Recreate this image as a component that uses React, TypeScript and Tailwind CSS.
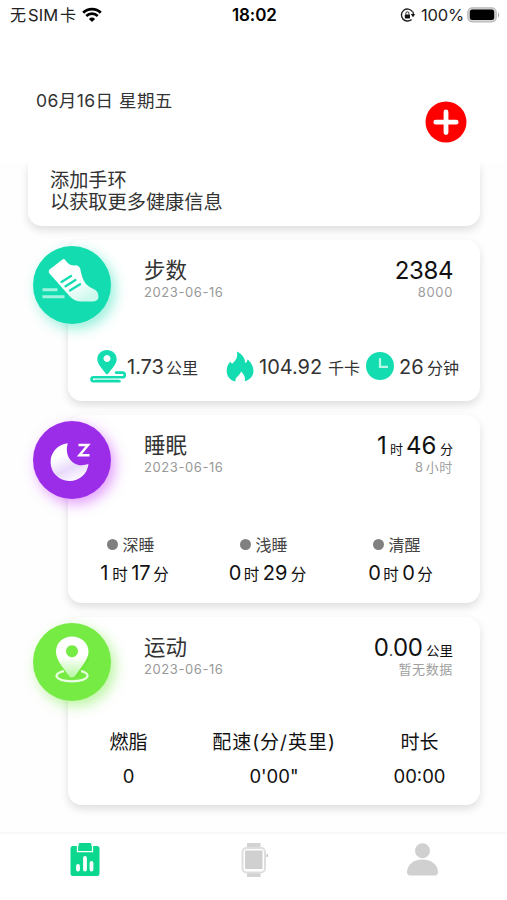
import React from "react";

function Wifi() {
  return (
    <svg className="ml-[7px] h-[16px] w-[20px]" viewBox="0 0 20 16" fill="none" stroke="#000">
      <path d="M1.2 5.7a12.4 12.4 0 0 1 17.6 0" strokeWidth="2.8" />
      <path d="M4.3 9a8 8 0 0 1 11.4 0" strokeWidth="2.6" />
      <path d="M10 15l-3.1-3.1a4.4 4.4 0 0 1 6.2 0z" fill="#000" stroke="none" />
    </svg>
  );
}

function StatusBar() {
  return (
    <div className="flex h-[30px] items-center text-black">
      <div className="flex w-[232px] items-center pl-[10px] text-[#222]">
        <span className="w-[18px] text-[16px]">无</span>
        <span className="w-[32px] text-[16.5px] tracking-[0.1px]">SIM</span>
        <span className="w-[15px] text-[16px]">卡</span>
        <Wifi />
      </div>
      <span className="w-[168px] pt-[1px] text-[17px] font-semibold tracking-[-0.1px]">18:02</span>
      <svg className="h-[14px] w-[16px]" viewBox="0 0 16 14" fill="none">
        <path d="M12.4 3.6A6 6 0 1 0 11.6 11.4" stroke="#222" strokeWidth="1.4" />
        <path d="M12.8 3.4A6 6 0 0 1 13.3 6" stroke="#222" strokeWidth="1.3" />
        <path d="M10.8 6h4.4l-2.2 3.2z" fill="#111" />
        <rect x="4.8" y="6.4" width="5.2" height="4" rx=".6" fill="#111" />
        <path d="M5.9 6.6V5.3a1.5 1.5 0 0 1 3 0v1.3" stroke="#222" strokeWidth="1" />
      </svg>
      <span className="ml-[5px] w-[46px] text-[16.5px] tracking-[-0.2px] text-[#222]">100%</span>
      <svg className="h-[17px] w-[34px]" viewBox="0 0 34 17">
        <rect x=".8" y=".8" width="28.400" height="14" rx="4.5" fill="#d8d8d8" stroke="#b8b8b8" strokeWidth="1.2" />
        <rect x="2.800" y="2.5" width="24.400" height="10.600" rx="2.5" fill="#000" />
        <path d="M31 5.500v5c1.6-.5 1.6-4.500 0-5z" fill="#aaa" />
      </svg>
    </div>
  );
}

function Header() {
  return (
    <header className="h-[163px] shrink-0 bg-white">
      <StatusBar />
      <div className="flex h-[133px] items-start justify-between pr-[40px] pl-[36px]">
        <span className="mt-[57px] text-[17.5px] leading-[27px] tracking-[0.45px] whitespace-nowrap text-[#333]">
          06月16日 星期五
        </span>
        <svg className="mt-[71px] h-[42px] w-[42px]" viewBox="0 0 42 42">
          <circle cx="21" cy="21" r="20.5" fill="#f00" />
          <path d="M21 11v20.500M10.800 21.200h20.400" stroke="#fff" strokeWidth="4.8" strokeLinecap="round" />
        </svg>
      </div>
    </header>
  );
}

function ShoeIcon() {
  return (
    <svg className="h-[78px] w-[78px]" viewBox="0 0 78 78">
      <defs>
        <linearGradient id="shoe" x1="0" y1="0" x2=".7" y2="1">
          <stop offset=".6" stopColor="#fff" />
          <stop offset="1" stopColor="#cdf8ed" />
        </linearGradient>
      </defs>
      <path
        d="M29.500 13.500Q30.800 12.300 32 13.600C34 17.500 38.500 20.500 42.500 19.300Q46 19.500 47.200 22.500C48 27 49.500 34 53.500 38.500Q56 41 61.500 43.500Q65.500 45.500 65.500 51Q65.200 55 60 55.500H49Q41 55.500 36.500 50L16.500 27.500Q14.500 25 17.500 22.800Z"
        fill="url(#shoe)"
      />
      <path d="M28.500 36L38 30M32.500 40.300L42.500 34M37 44.500L47 38.200" stroke="#13ddb0" strokeWidth="2.300" strokeLinecap="round" />
      <path d="M9.500 43.800H24.500M9.500 50.800H31.500" stroke="#a0f3df" strokeWidth="3" />
    </svg>
  );
}

function MoonIcon() {
  return (
    <svg className="h-[78px] w-[78px]" viewBox="0 0 78 78">
      <defs>
        <linearGradient id="moon" x1=".2" y1=".1" x2=".6" y2="1">
          <stop offset=".25" stopColor="#fff" />
          <stop offset=".65" stopColor="#e8dafb" />
          <stop offset="1" stopColor="#fcf9ff" />
        </linearGradient>
      </defs>
      <path d="M34.800 22.200C30.500 36 41.500 48.500 55.500 42.800A19 19 0 1 1 34.800 22.200Z" fill="url(#moon)" />
      <path d="M45.500 24H55L46.500 34.300H56.500" fill="none" stroke="#fff" strokeWidth="2.500" />
    </svg>
  );
}

function PinIcon() {
  return (
    <svg className="h-[78px] w-[78px]" viewBox="0 0 78 78">
      <defs>
        <linearGradient id="pin" x1="0" y1="0" x2="0" y2="1">
          <stop offset=".5" stopColor="#fff" />
          <stop offset="1" stopColor="#b5f7a0" />
        </linearGradient>
      </defs>
      <path d="M39 55L55 33L57 36L45 54Z" fill="#5fd92e" opacity=".3" />
      <path
        fillRule="evenodd"
        d="M39 13.500c9 0 16.500 6.500 16.500 15c0 4.500-2.500 9-5.500 13.500L42 53q-3 3-6 0l-8-11c-3-4.500-5-9-5-13.500c0-8.500 7-15 16-15zM39 22.200a6 6 0 1 0 .01 0z"
        fill="url(#pin)"
      />
      <path d="M31 48.200C20 50 20 58 39 58.300C58 58 58 50 48 48.200" fill="none" stroke="#e9fee2" strokeWidth="2.200" />
    </svg>
  );
}

function RouteIcon() {
  return (
    <svg className="h-[34px] w-[37px]" viewBox="0 0 37 34">
      <path
        fillRule="evenodd"
        d="M17 0c5.500 0 9.700 4 9.700 9.300c0 4.700-4.700 9-8.300 14.200q-1.400 1.500-2.800 0C12 18.300 7.300 14 7.300 9.300C7.300 4 11.500 0 17 0zM17 5a3.500 3.500 0 1 0 .01 0z"
        fill="#13ddb0"
      />
      <path d="M26 22.600H32.500a2.300 2.300 0 0 1 0 4.600H3.500a2 2 0 0 0 0 4H29.500" fill="none" stroke="#13ddb0" strokeWidth="2.600" strokeLinecap="round" />
      <path d="M5 29.300H29" stroke="#a5f2e0" strokeWidth="1.200" />
    </svg>
  );
}

function FlameIcon() {
  return (
    <svg className="relative -top-[1px] h-[31px] w-[28px]" viewBox="0 0 28 31">
      <path
        d="M11 .5C16 3 19.500 7.500 19 12Q21.500 11 21.500 8.500C24.500 10.500 27.500 15 27.500 20C27.500 25 24 29 18.500 30.300C20 27.500 18.500 24 15 20.500C14 25 8.500 26 9.500 30.500C4 29.500 .7 25 .7 19.500Q.7 14.500 4.500 10.500Q4.500 12.500 6.500 12.500C10.500 9 12 5 11 .5Z"
        fill="#13ddb0"
      />
    </svg>
  );
}

function ClockIcon() {
  return (
    <svg className="relative -top-[1px] h-[28px] w-[28px]" viewBox="0 0 28 28">
      <circle cx="14" cy="14" r="14" fill="#13ddb0" />
      <path d="M14 6.200V14.800H22" fill="none" stroke="#b9f8e9" strokeWidth="2.200" />
    </svg>
  );
}

type CardProps = {
  height: string;
  badge: string;
  icon: React.ReactNode;
  title: string;
  value: React.ReactNode;
  goal: React.ReactNode;
  children: React.ReactNode;
};

const shadow = "shadow-[0_4px_8px_rgba(0,0,0,0.13)]";

function Card({ height, badge, icon, title, value, goal, children }: CardProps) {
  return (
    <section className={`relative mt-[14px] ml-[68px] w-[412px] shrink-0 rounded-[14px] bg-white ${shadow} ${height}`}>
      <div className={`absolute top-[5.500px] left-[-35px] h-[78px] w-[78px] rounded-full ${badge}`}>{icon}</div>
      <div className="flex h-[100px] justify-between pt-[16px] pr-[27px] pl-[76px]">
        <div className="flex flex-col">
          <h2 className="text-[21.500px] leading-[28px] text-[#333]">{title}</h2>
          <span className="text-[13px] leading-[17px] tracking-[0.58px] text-[#999]">2023-06-16</span>
        </div>
        <div className="flex flex-col items-end">
          <div className="flex h-[28px] items-baseline whitespace-nowrap text-[#111]">{value}</div>
          <span className="text-[13px] leading-[17px] tracking-[0.65px] whitespace-nowrap text-[#a0a0a0]">{goal}</span>
        </div>
      </div>
      {children}
    </section>
  );
}

function Duration({ h, m, hw, mw }: { h: string; m: string; hw: string; mw: string }) {
  return (
    <div className="flex items-baseline leading-[28px] text-[#111]">
      <span className={`text-[20px] ${hw}`}>{h}</span>
      <span className="w-[19px] text-[15.500px]">时</span>
      <span className={`text-[20px] ${mw}`}>{m}</span>
      <span className="text-[15.500px]">分</span>
    </div>
  );
}

function Phase({ label, children }: { label: string; children: React.ReactNode }) {
  return (
    <div className="flex w-[133px] flex-col items-center">
      <div className="flex h-[24px] items-center gap-[4px] pr-[7px] text-[16px] text-[#444]">
        <i className="h-[11px] w-[11px] rounded-full bg-[#808080]" />
        <span className="pt-[1px]">{label}</span>
      </div>
      <div className="mt-[3px]">{children}</div>
    </div>
  );
}

function Metric({ label, value, width }: { label: string; value: string; width: string }) {
  return (
    <div className={`flex flex-col items-center whitespace-nowrap text-[#111] ${width}`}>
      {label.length > 2 ? (
        <span className="text-[19px] leading-[28px] tracking-[1px]">{label}</span>
      ) : (
        <span className="text-[19px] leading-[28px]">{label}</span>
      )}
      <span className="mt-[5px] text-[18.500px] leading-[28px]">{value}</span>
    </div>
  );
}

function TabBar() {
  return (
    <nav className="flex h-[68px] shrink-0 items-start border-t-2 border-[#f7f7f7] bg-white pt-[9px]">
      <div className="flex w-1/3 justify-center">
        <svg className="h-[36px] w-[30px]" viewBox="0 0 30 36">
          <rect x=".5" y="3" width="29" height="30" rx="2.500" fill="#0bd88e" />
          <path d="M7.500 2.500V8.600H22.500V2.500" fill="none" stroke="#fff" strokeWidth="1.300" />
          <rect x="8.700" y="0" width="12.600" height="7.800" rx="1.200" fill="#0bd88e" />
          <path d="M8 23V26.500M15 15V26.500M21.500 20V26.500" stroke="#fff" strokeWidth="3.800" strokeLinecap="round" />
        </svg>
      </div>
      <div className="flex w-1/3 justify-center">
        <svg className="h-[36px] w-[28px]" viewBox="0 0 28 36">
          <path d="M7 0H20.500V4H7zM7 30H20.500V34H7z" fill="#d3d3d3" />
          <rect x="2.500" y="5" width="22.500" height="24.500" rx="4" fill="#fff" stroke="#dedede" strokeWidth="2" />
          <rect x="5" y="7.500" width="17.500" height="18.500" fill="#d0d0d0" />
          <path d="M27.200 11V14" stroke="#bbb" strokeWidth="1.300" />
        </svg>
      </div>
      <div className="flex w-1/3 justify-center">
        <svg className="h-[34px] w-[33px]" viewBox="0 0 33 34">
          <circle cx="16.500" cy="7.800" r="7.500" fill="#d0d0d0" />
          <path d="M16.500 16.500C24 16.500 32 21 32 29Q32 32.500 28.500 32.500H4.500Q1 32.500 1 29C1 21 9 16.500 16.500 16.500Z" fill="#d0d0d0" />
        </svg>
      </div>
    </nav>
  );
}

export default function App() {
  return (
    <div className="flex h-[900px] w-[507px] flex-col overflow-hidden bg-[#fefefe] font-['Inter','Noto_Sans_CJK_SC',sans-serif]">
      <Header />
      <main className="flex h-[669px] shrink-0 flex-col overflow-hidden">
        <section className={`ml-[28px] h-[63px] w-[452px] shrink-0 rounded-b-[14px] bg-white pt-[6px] pl-[22px] text-[19.200px] leading-[22px] text-[#333] ${shadow}`}>
          <p>添加手环</p>
          <p>以获取更多健康信息</p>
        </section>

        <Card
          height="h-[161px]"
          badge="bg-[#13ddb0] shadow-[4px_5px_13px_rgba(19,221,176,0.45)]"
          icon={<ShoeIcon />}
          title="步数"
          value={<span className="text-[24px] leading-[30px] tracking-[-0.400px]">2384</span>}
          goal="8000"
        >
          <div className="flex h-[54px] items-center pl-[22px] text-[20px] whitespace-nowrap text-[#333]">
            <RouteIcon />
            <div className="flex w-[99px] items-baseline">
              <span className="w-[39px]">1.73</span>
              <span className="text-[16px]">公里</span>
            </div>
            <FlameIcon />
            <div className="ml-[5px] flex w-[107px] items-baseline">
              <span className="w-[69px]">104.92</span>
              <span className="text-[16px]">千卡</span>
            </div>
            <ClockIcon />
            <div className="ml-[5px] flex items-baseline">
              <span className="w-[28px]">26</span>
              <span className="text-[16px]">分钟</span>
            </div>
          </div>
        </Card>

        <Card
          height="h-[188px]"
          badge="bg-[#9b2de8] shadow-[4px_5px_13px_rgba(200,60,250,0.5)]"
          icon={<MoonIcon />}
          title="睡眠"
          value={
            <>
              <span className="w-[13px] text-[24px] leading-[30px]">1</span>
              <span className="w-[16px] text-[13px]">时</span>
              <span className="w-[34px] text-[24px] leading-[30px]">46</span>
              <span className="text-[13px]">分</span>
            </>
          }
          goal={
            <>
              <span className="mr-[2px]">8</span>小时
            </>
          }
        >
          <div className="flex w-[399px] pt-[17px]">
            <Phase label="深睡">
              <Duration h="1" m="17" hw="w-[12px]" mw="w-[22px]" />
            </Phase>
            <Phase label="浅睡">
              <Duration h="0" m="29" hw="w-[15px]" mw="w-[28px]" />
            </Phase>
            <Phase label="清醒">
              <Duration h="0" m="0" hw="w-[15px]" mw="w-[15px]" />
            </Phase>
          </div>
        </Card>

        <Card
          height="h-[188px]"
          badge="bg-[#75eb43] shadow-[4px_5px_13px_rgba(117,235,67,0.5)]"
          icon={<PinIcon />}
          title="运动"
          value={
            <>
              <span className="text-[24px] leading-[30px]">0</span>
              <span className="text-[14px]">.</span>
              <span className="w-[33px] text-[24px] leading-[30px] tracking-[-0.500px]">00</span>
              <span className="text-[13.500px]">公里</span>
            </>
          }
          goal="暂无数据"
        >
          <div className="flex pt-[12px]">
            <Metric label="燃脂" value="0" width="w-[121px]" />
            <Metric label="配速(分/英里)" value={"0'00\""} width="w-[170px]" />
            <Metric label="时长" value="00:00" width="w-[121px]" />
          </div>
        </Card>
      </main>
      <TabBar />
    </div>
  );
}
